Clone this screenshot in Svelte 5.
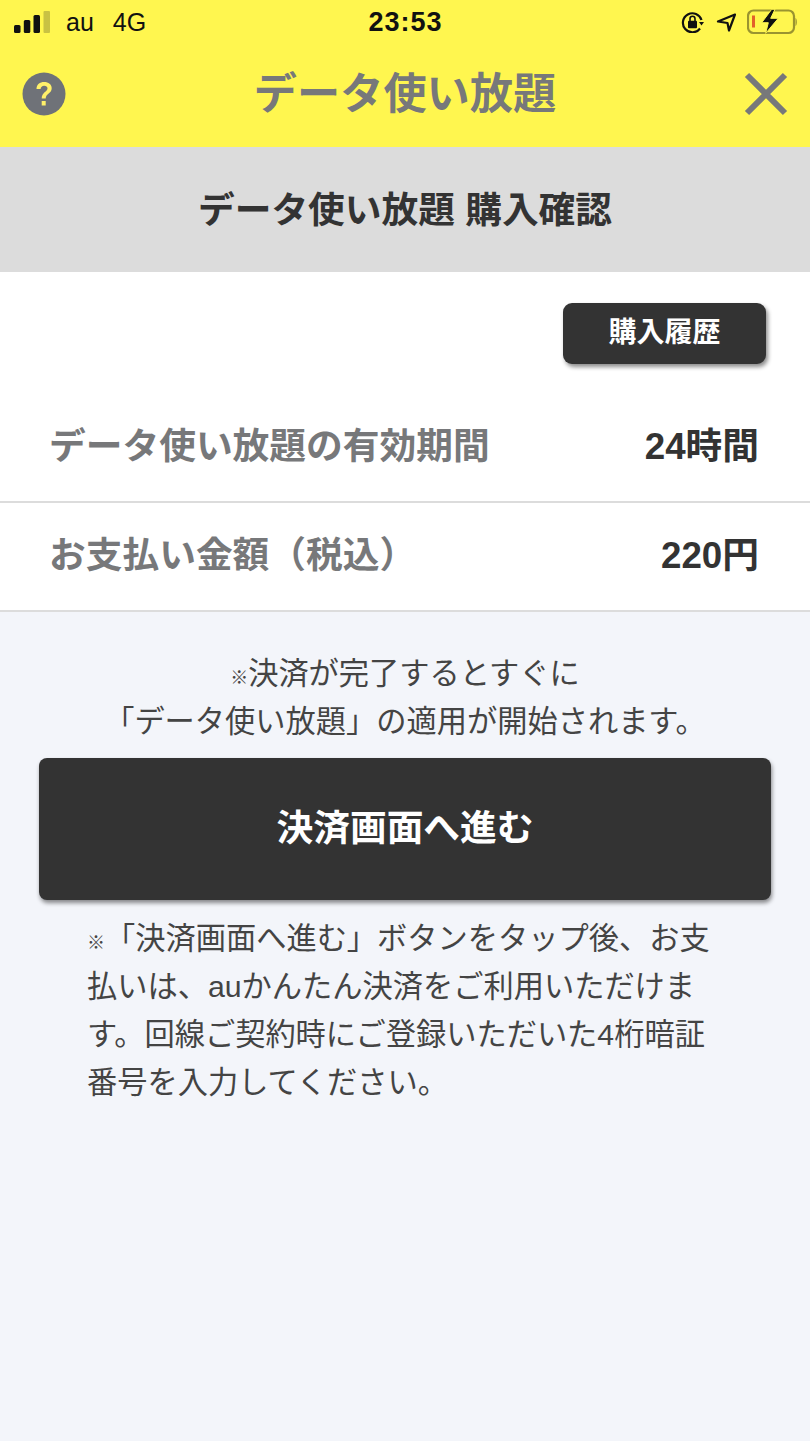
<script>
    const rows = [
        { label: "データ使い放題の有効期間", value: "24時間" },
        { label: "お支払い金額（税込）", value: "220円" },
    ];
</script>

<style>
    :global(body) {
        background: #f3f5fa;
    }
    .page {
        min-height: 1441px;
        background: #f3f5fa;
        font-family: "Liberation Sans", "Noto Sans CJK JP", sans-serif;
        color: #333;
    }
    .top {
        background: #fff64f;
        height: 147px;
    }
    .status {
        height: 44px;
        padding: 0 13px 0 14px;
        display: grid;
        grid-template-columns: 1fr auto 1fr;
        align-items: center;
        color: #111;
        font-size: 25px;
    }
    .statusLeft {
        display: flex;
        align-items: center;
    }
    .carrier {
        margin-left: 16px;
    }
    .net {
        margin-left: 19px;
    }
    .clock {
        font-size: 27px;
        font-weight: 700;
        letter-spacing: 1px;
    }
    .statusIcons {
        display: flex;
        align-items: center;
        justify-content: flex-end;
        gap: 11px;
    }
    .header {
        height: 100px;
        padding: 0 22px;
        display: flex;
        align-items: center;
        justify-content: space-between;
    }
    .header h1 {
        margin: 0;
        padding-top: 2px;
        font-size: 43.2px;
        font-weight: 700;
        color: #77787a;
        line-height: 1;
    }
    .subtitle {
        height: 125px;
        box-sizing: border-box;
        padding-bottom: 6px;
        background: #dcdcdc;
        display: flex;
        align-items: center;
        justify-content: center;
        font-size: 36.72px;
        font-weight: 700;
        color: #333;
    }
    .panel {
        background: #fff;
        padding-top: 31px;
    }
    .historyRow {
        display: flex;
        justify-content: flex-end;
        padding: 0 44px 30px 0;
    }
    .history {
        width: 203px;
        height: 61px;
        padding: 0 0 7px;
        border: 0;
        border-radius: 9px;
        background: #333;
        color: #fff;
        font: inherit;
        font-size: 28px;
        font-weight: 700;
        box-shadow: 2px 3px 4px rgba(0, 0, 0, 0.45);
    }
    .row {
        height: 109px;
        box-sizing: border-box;
        padding: 0 51px 10px 49px;
        display: flex;
        align-items: center;
        justify-content: space-between;
        border-bottom: 2px solid #dcdcdc;
    }
    .label {
        font-size: 36.72px;
        font-weight: 700;
        color: #77787a;
    }
    .value {
        font-size: 36.72px;
        font-weight: 700;
        color: #333;
    }
    .notice {
        margin: 0;
        padding-top: 38px;
        text-align: center;
        font-size: 30.24px;
        line-height: 48px;
        color: #444;
    }
    .mark {
        font-family: "Noto Sans CJK JP", sans-serif;
        font-size: 18px;
        font-weight: 700;
        line-height: 1;
    }
    .mainRow {
        padding: 0 39px;
        margin-top: 12px;
    }
    .main {
        width: 100%;
        height: 142px;
        padding: 0 0 8px;
        border: 0;
        border-radius: 8px;
        background: #333;
        color: #fff;
        font: inherit;
        font-size: 36.72px;
        font-weight: 700;
        box-shadow: 1px 3px 4px rgba(0, 0, 0, 0.45);
    }
    .note {
        margin: 0;
        padding: 15px 95px 0 87px;
        font-size: 30.24px;
        line-height: 48px;
        color: #444;
    }
</style>

<div class="page">
    <div class="top">
        <div class="status">
            <div class="statusLeft">
                <svg width="36" height="24" viewBox="0 0 36 24">
                    <rect x="0" y="15" width="6.500" height="8" rx="1.500" fill="#111" />
                    <rect x="9.800" y="10" width="6.500" height="13" rx="1.500" fill="#111" />
                    <rect x="19.500" y="5" width="6.500" height="18" rx="1.500" fill="#111" />
                    <rect x="29.500" y="1" width="6.500" height="22" rx="1" fill="#c9c243" />
                </svg>
                <span class="carrier">au</span>
                <span class="net">4G</span>
            </div>
            <span class="clock">23:53</span>
            <div class="statusIcons">
                <svg width="24" height="22" viewBox="0 0 24 22" fill="none">
                    <path d="M21.500 9A9.500 9.500 0 1 0 20 17.500" stroke="#111" stroke-width="2.200" />
                    <path d="M19 11h5l-2.500 3.500z" fill="#111" />
                    <rect x="8" y="9.700" width="9" height="7.600" rx="1" fill="#111" />
                    <path d="M10 10V7.800a2.500 2.500 0 0 1 5 0V10" stroke="#111" stroke-width="1.600" />
                </svg>
                <svg width="21" height="20" viewBox="0 0 21 20" fill="none">
                    <path d="M20 2.500 3 9.500l9.500 1.500L14 18.500z" stroke="#111" stroke-width="2.200" stroke-linejoin="round" />
                </svg>
                <svg width="50" height="26" viewBox="0 0 50 26" fill="none">
                    <rect x="1" y="1.500" width="46" height="22.500" rx="5.500" stroke="#9a9430" stroke-width="2.200" />
                    <rect x="5" y="6.500" width="3" height="12" fill="#e2612a" />
                    <path d="M48.500 9c1.800 .6 1.800 7.400 0 8z" fill="#9a9430" />
                    <path d="M24.700 .3 14.700 13.700h6.600L18.700 24.300 31.300 9.300h-7.600L28 .3z" fill="#111" stroke="#fff64f" stroke-width="1" />
                </svg>
            </div>
        </div>
        <div class="header">
            <svg width="44" height="44" viewBox="0 0 44 44">
                <circle cx="22" cy="22" r="21.500" fill="#6f7278" />
                <path d="M14.500 17c0-4.500 3.300-7 7.700-7 4.300 0 7.500 2.400 7.500 6.200 0 5.300-6 5.300-6 10.300h-4c0-6.500 5.800-6.800 5.800-10.100 0-1.600-1.400-2.700-3.300-2.700-2.100 0-3.500 1.300-3.600 3.300z" fill="#fff06a" />
                <rect x="19.700" y="29" width="4" height="4.500" fill="#fff06a" />
            </svg>
            <h1>データ使い放題</h1>
            <svg width="44" height="44" viewBox="0 0 44 44">
                <path d="M3 3 41 41M41 3 3 41" stroke="#77787a" stroke-width="6" fill="none" />
            </svg>
        </div>
    </div>
    <div class="subtitle">データ使い放題 購入確認</div>
    <div class="panel">
        <div class="historyRow">
            <button class="history">購入履歴</button>
        </div>
        {#each rows as row}
            <div class="row">
                <span class="label">{row.label}</span>
                <span class="value">{row.value}</span>
            </div>
        {/each}
    </div>
    <p class="notice"><span class="mark">※</span>決済が完了するとすぐに<br />「データ使い放題」の適用が開始されます。</p>
    <div class="mainRow">
        <button class="main">決済画面へ進む</button>
    </div>
    <p class="note"><span class="mark">※</span>「決済画面へ進む」ボタンをタップ後、お支払いは、auかんたん決済をご利用いただけます。回線ご契約時にご登録いただいた4桁暗証番号を入力してください。</p>
</div>
